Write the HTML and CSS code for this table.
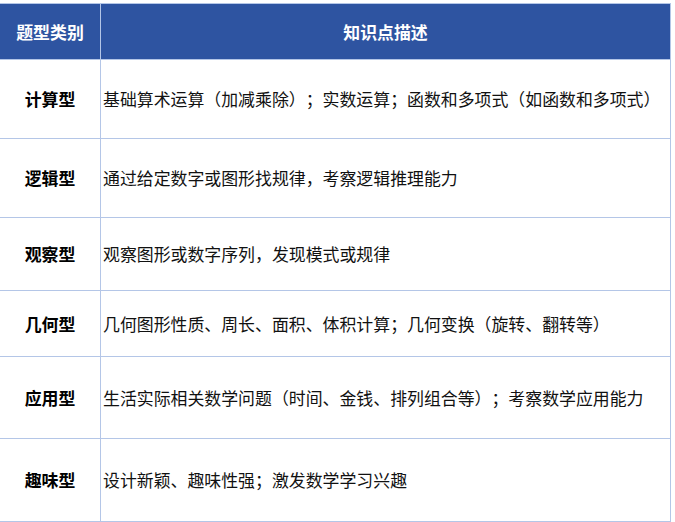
FILE: index.html
```html
<!DOCTYPE html>
<html lang="zh">
<head>
<meta charset="utf-8">
<link rel="stylesheet" href="styles.css">
</head>
<body>
<table class="kt">
  <thead>
    <tr class="h">
      <th class="c1">题型类别</th>
      <th class="c2">知识点描述</th>
    </tr>
  </thead>
  <tbody>
    <tr class="r1"><td class="c1">计算型</td><td class="c2">基础算术运算（加减乘除）；实数运算；函数和多项式（如函数和多项式）</td></tr>
    <tr class="r2"><td class="c1">逻辑型</td><td class="c2">通过给定数字或图形找规律，考察逻辑推理能力</td></tr>
    <tr class="r3"><td class="c1">观察型</td><td class="c2">观察图形或数字序列，发现模式或规律</td></tr>
    <tr class="r4"><td class="c1">几何型</td><td class="c2">几何图形性质、周长、面积、体积计算；几何变换（旋转、翻转等）</td></tr>
    <tr class="r5"><td class="c1">应用型</td><td class="c2">生活实际相关数学问题（时间、金钱、排列组合等）；考察数学应用能力</td></tr>
    <tr class="r6"><td class="c1">趣味型</td><td class="c2">设计新颖、趣味性强；激发数学学习兴趣</td></tr>
  </tbody>
</table>
</body>
</html>
```
FILE: styles.css
```css
html, body {
  margin: 0;
  padding: 0;
  background: #ffffff;
}
body {
  font-family: "Noto Sans CJK SC", "Noto Sans", sans-serif;
  font-size: 16.9px;
  color: #111111;
  overflow: hidden;
  text-spacing-trim: space-all;
}
.kt {
  border-collapse: collapse;
  margin-top: 3px;
  margin-left: -1px;
  width: 672px;
  table-layout: fixed;
}
.kt th, .kt td {
  border: 1px solid #b4c6e7;
  padding: 0;
  vertical-align: middle;
  line-height: 20px;
}
.kt th {
  background: #2e54a1;
  color: #ffffff;
  font-weight: bold;
  text-align: center;
}
.kt th.c1 { width: 100px; }
.kt td.c1 {
  font-weight: bold;
  text-align: center;
  color: #000000;
}
.kt td.c2 {
  text-align: left;
  padding-left: 2px;
  white-space: nowrap;
}
.h { height: 56px; }
.r1 { height: 79px; }
.r2 { height: 79px; }
.r3 { height: 73px; }
.r4 { height: 66px; }
.r5 { height: 82px; }
.r6 { height: 83px; }
```
